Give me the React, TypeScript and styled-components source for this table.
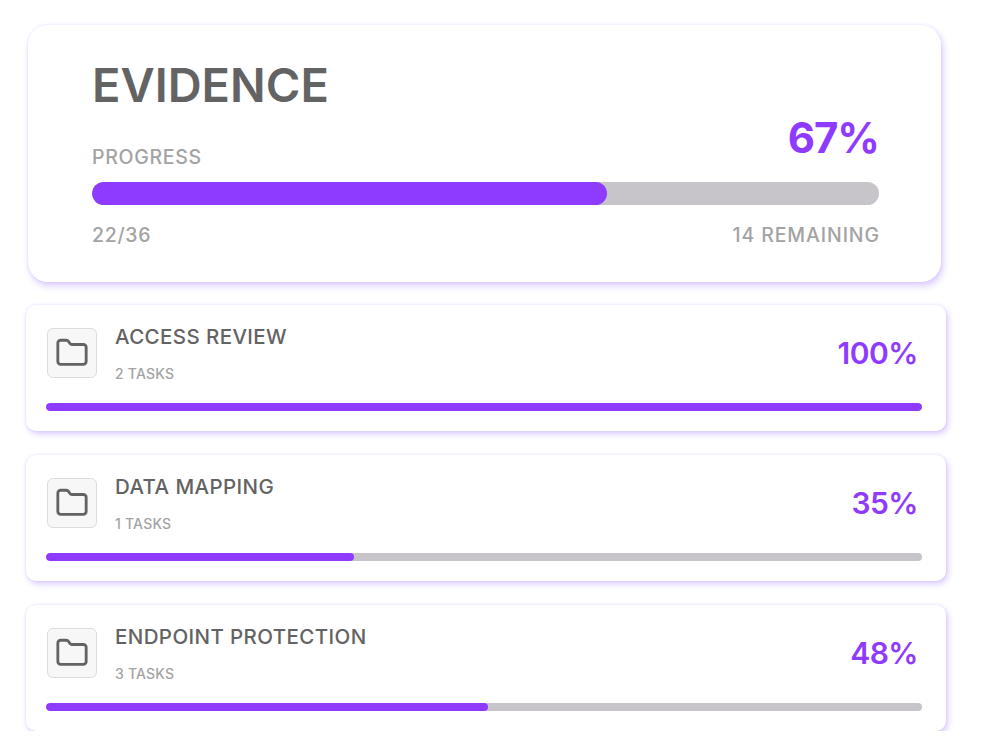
import React from "react"
import styled, { createGlobalStyle } from "styled-components"

const GlobalStyle = createGlobalStyle`
  html, body {
    margin: 0;
    padding: 0;
    background: #ffffff;
    font-family: Inter, "Noto Sans", "DejaVu Sans", sans-serif;
  }
`

const purple = "#8e3bff"
const track = "#c7c5c9"
const heading = "#636363"
const muted = "#a3a3a3"

const Page = styled.div`
  width: 920px;
  padding: 25px 0 0 26px;
  display: flex;
  flex-direction: column;
  gap: 24px;
`

const SummaryCard = styled.section`
  margin: 0 5px -1px 2px;
  background: #fff;
  border-radius: 20px;
  padding: 32px 62px 35px 64px;
  box-shadow: 0 0 3px rgba(150, 110, 255, 0.18), 2px 4px 7px rgba(145, 95, 250, 0.32);
`

const Title = styled.h1`
  margin: 0;
  font-size: 47px;
  font-weight: 600;
  line-height: 56px;
  color: ${heading};
`

const ProgressHead = styled.div`
  display: flex;
  justify-content: space-between;
  align-items: flex-end;
  margin-top: 2px;
`

const Label = styled.span`
  font-size: 19.5px;
  font-weight: 500;
  color: ${muted};
  line-height: 24px;
  letter-spacing: 0.7px;
`

const RightLabel = styled(Label)`
  margin-right: -1px;
  letter-spacing: 0.9px;
`

const BigPercent = styled.span`
  font-size: 42px;
  font-weight: 700;
  color: ${purple};
  line-height: 46px;
  margin-bottom: 8px;
  letter-spacing: -1px;
`

const Track = styled.div<{ $h: number }>`
  height: ${(p) => p.$h}px;
  border-radius: ${(p) => p.$h / 2}px;
  background: ${track};
  overflow: hidden;
`

const Fill = styled.div`
  height: 100%;
  border-radius: inherit;
  background: ${purple};
`

const SummaryTrack = styled(Track)`
  margin-top: 13px;
`

const Footer = styled.div`
  display: flex;
  justify-content: space-between;
  margin-top: 18px;
`

const ItemCard = styled.section`
  height: 126px;
  box-sizing: border-box;
  background: #fff;
  border-radius: 10px;
  padding: 20px 24px 0 20px;
  box-shadow: 0 0 3px rgba(150, 110, 255, 0.18), 2px 3px 6px rgba(145, 95, 250, 0.32);
`

const ItemTop = styled.div`
  display: flex;
  align-items: flex-start;
  height: 57px;
`

const IconBox = styled.div`
  width: 48px;
  height: 48px;
  border: 1px solid #dcdcdc;
  border-radius: 6px;
  background: #f7f7f7;
  display: flex;
  align-items: center;
  justify-content: center;
  flex-shrink: 0;
  margin: 3px 0 0 1px;
`

const ItemText = styled.div`
  flex: 1;
  margin-left: 18px;
  display: flex;
  flex-direction: column;
`

const ItemTitle = styled.div`
  font-size: 20.5px;
  font-weight: 500;
  color: ${heading};
  line-height: 24px;
  letter-spacing: 0.4px;
`

const ItemSub = styled.div`
  font-size: 14px;
  font-weight: 500;
  color: ${muted};
  line-height: 17px;
  margin-top: 16px;
  letter-spacing: 0.2px;
`

const ItemPercent = styled.div`
  font-size: 30px;
  font-weight: 600;
  color: ${purple};
  line-height: 36px;
  margin: 10px 4px 0 0;
  letter-spacing: -0.5px;
`

const ItemTrack = styled(Track)`
  margin-top: 21px;
`

const FolderIcon = () => (
  <svg width="34" height="34" viewBox="0 0 24 24" fill="none" stroke="#636363" strokeWidth="2" strokeLinecap="round" strokeLinejoin="round">
    <path d="M20 20a2 2 0 0 0 2-2V8a2 2 0 0 0-2-2h-7.9a2 2 0 0 1-1.69-.9L9.6 3.9A2 2 0 0 0 7.93 3H4a2 2 0 0 0-2 2v13a2 2 0 0 0 2 2Z" />
  </svg>
)

const items = [
  { name: "ACCESS REVIEW", tasks: 2, pct: 100, fill: 100 },
  { name: "DATA MAPPING", tasks: 1, pct: 35, fill: 35.2 },
  { name: "ENDPOINT PROTECTION", tasks: 3, pct: 48, fill: 50.4 },
]

export default function App() {
  return (
    <>
      <GlobalStyle />
      <Page>
        <SummaryCard>
          <Title>EVIDENCE</Title>
          <ProgressHead>
            <Label>PROGRESS</Label>
            <BigPercent>67%</BigPercent>
          </ProgressHead>
          <SummaryTrack $h={23}>
            <Fill style={{ width: "65.5%" }} />
          </SummaryTrack>
          <Footer>
            <Label>22/36</Label>
            <RightLabel>14 REMAINING</RightLabel>
          </Footer>
        </SummaryCard>
        {items.map((it) => (
          <ItemCard key={it.name}>
            <ItemTop>
              <IconBox>
                <FolderIcon />
              </IconBox>
              <ItemText>
                <ItemTitle>{it.name}</ItemTitle>
                <ItemSub>{it.tasks} TASKS</ItemSub>
              </ItemText>
              <ItemPercent>{it.pct}%</ItemPercent>
            </ItemTop>
            <ItemTrack $h={8}>
              <Fill style={{ width: `${it.fill}%` }} />
            </ItemTrack>
          </ItemCard>
        ))}
      </Page>
    </>
  )
}
